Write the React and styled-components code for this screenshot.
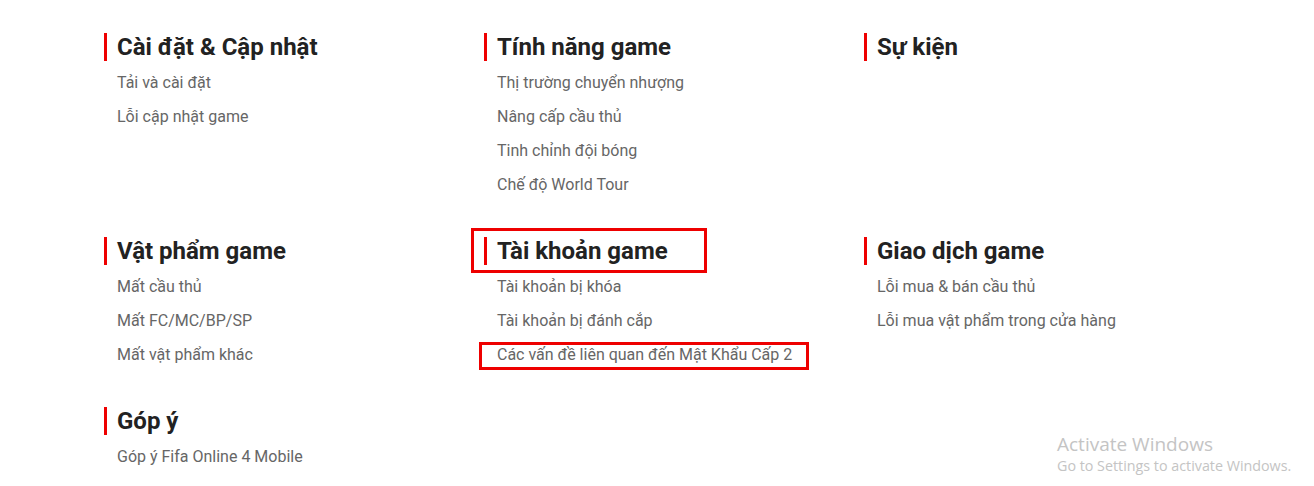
import React from "react";
import styled, { createGlobalStyle } from "styled-components";

const GlobalStyle = createGlobalStyle`
  html, body {
    margin: 0;
    padding: 0;
    background: #fff;
  }
  body {
    font-family: 'Roboto', 'Liberation Sans', sans-serif;
  }
`;

const sections = [
  {
    title: "Cài đặt & Cập nhật",
    items: ["Tải và cài đặt", "Lỗi cập nhật game"],
  },
  {
    title: "Tính năng game",
    items: [
      "Thị trường chuyển nhượng",
      "Nâng cấp cầu thủ",
      "Tinh chỉnh đội bóng",
      "Chế độ World Tour",
    ],
  },
  { title: "Sự kiện", items: [] },
  {
    title: "Vật phẩm game",
    items: ["Mất cầu thủ", "Mất FC/MC/BP/SP", "Mất vật phẩm khác"],
  },
  {
    title: "Tài khoản game",
    marked: true,
    items: [
      "Tài khoản bị khóa",
      "Tài khoản bị đánh cắp",
      { text: "Các vấn đề liên quan đến Mật Khẩu Cấp 2", marked: true },
    ],
  },
  {
    title: "Giao dịch game",
    items: ["Lỗi mua & bán cầu thủ", "Lỗi mua vật phẩm trong cửa hàng"],
  },
  { title: "Góp ý", items: ["Góp ý Fifa Online 4 Mobile"] },
];

function App() {
  return (
    <Page>
      <GlobalStyle />
      <Grid>
        {sections.map((s) => (
          <Section key={s.title}>
            <Heading $marked={s.marked}>{s.title}</Heading>
            <List>
              {s.items.map((item) => {
                const text = typeof item === "string" ? item : item.text;
                const marked = typeof item === "object" && item.marked;
                return (
                  <Item key={text} $marked={marked}>
                    <ItemLink href="#">{text}</ItemLink>
                  </Item>
                );
              })}
            </List>
          </Section>
        ))}
      </Grid>
      <Watermark>
        <WatermarkTitle>Activate Windows</WatermarkTitle>
        <WatermarkText>Go to Settings to activate Windows.</WatermarkText>
      </Watermark>
    </Page>
  );
}

const Page = styled.div`
  position: relative;
  width: 1314px;
  height: 486px;
  overflow: hidden;
  padding-top: 33px;
  box-sizing: border-box;
`;

const Grid = styled.div`
  display: grid;
  grid-template-columns: repeat(3, 380px);
  row-gap: 35px;
  margin-left: 104px;
`;

const Section = styled.div`
  display: flex;
  flex-direction: column;
`;

const Heading = styled.h3`
  position: relative;
  margin: 0;
  padding-left: 10px;
  border-left: 3px solid #ee0000;
  font-family: 'Roboto', 'Liberation Sans', sans-serif;
  font-size: 24px;
  font-weight: 700;
  line-height: 28px;
  color: #222;
  align-self: flex-start;

  ${(p) =>
    p.$marked &&
    `
    &::after {
      content: "";
      position: absolute;
      left: -16px;
      top: -9px;
      width: 236px;
      height: 45px;
      border: 3px solid #ee0000;
      box-sizing: border-box;
    }
  `}
`;

const List = styled.ul`
  list-style: none;
  margin: 5px 0 0;
  padding: 0 0 0 13px;
`;

const Item = styled.li`
  position: relative;
  line-height: 34px;
  height: 34px;

  ${(p) =>
    p.$marked &&
    `
    &::after {
      content: "";
      position: absolute;
      left: -18px;
      top: 4px;
      width: 330px;
      height: 28px;
      border: 3px solid #ee0000;
      box-sizing: border-box;
    }
  `}
`;

const ItemLink = styled.a`
  font-family: 'Roboto', 'Liberation Sans', sans-serif;
  font-size: 16px;
  color: #666;
  text-decoration: none;
`;

const Watermark = styled.div`
  position: absolute;
  left: 1057px;
  top: 432px;
  font-family: 'Open Sans', 'Noto Sans', sans-serif;
  color: #c4c4c4;
`;

const WatermarkTitle = styled.div`
  font-size: 19px;
  line-height: 24px;
`;

const WatermarkText = styled.div`
  font-size: 14.3px;
  line-height: 20px;
`;

export default App;
